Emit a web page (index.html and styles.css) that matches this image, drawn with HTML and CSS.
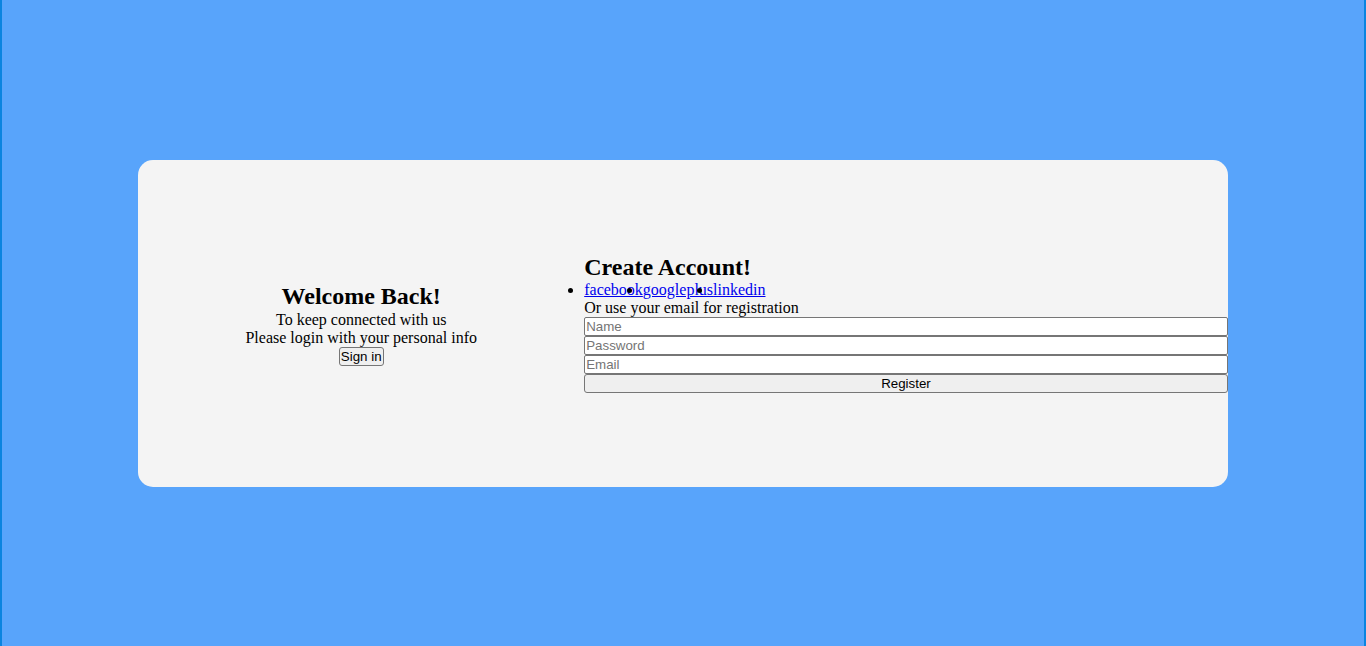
FILE: index.html
```html
<!DOCTYPE html>
<html lang="en">
<head>
<meta charset="utf-8">
<title>Sign up</title>
<link rel="stylesheet" href="styles.css">
</head>
<body>
  <div class="container">
    <div class="overlay-panel">
      <h2>Welcome Back!</h2>
      <p>To keep connected with us</p>
      <p>Please login with your personal info</p>
      <button class="ghost">Sign in</button>
    </div>
    <div class="form-panel">
      <form class="form">
        <h2>Create Account!</h2>
        <ul class="social">
          <li><a href="#">facebook</a></li>
          <li><a href="#">googleplus</a></li>
          <li><a href="#">linkedin</a></li>
        </ul>
        <span>Or use your email for registration</span>
        <input type="text" placeholder="Name">
        <input type="password" placeholder="Password">
        <input type="email" placeholder="Email">
        <button type="button">Register</button>
      </form>
    </div>
  </div>
</body>
</html>
```

FILE: styles.css
```css
* {
  margin: 0;
  padding: 0;
  box-sizing: border-box;
}

html, body {
  height: 100%;
}

body {
  background: #58a4fb;
  border-left: 2px solid #0a84e0;
  border-right: 2px solid #0a84e0;
  font-family: "Liberation Serif", "Times New Roman", serif;
  font-size: 16px;
  color: #000;
  display: flex;
  align-items: center;
  justify-content: center;
}

.container {
  width: 80%;
  height: 327px;
  background: #f4f4f4;
  border-radius: 15px;
  display: flex;
  align-items: center;
}

h2 {
  font-size: 24px;
  font-weight: bold;
}

.overlay-panel {
  width: 446px;
  flex: none;
  text-align: center;
  padding-top: 2px;
}

.overlay-panel h2 {
  line-height: 29px;
}

.form-panel {
  flex: 1;
  min-width: 0;
}

.form {
  display: flex;
  flex-direction: column;
}

.social {
  display: flex;
  list-style: disc outside;
}

.social a {
  color: #0000ee;
}

input,
button {
  font-family: "Liberation Sans", Arial, sans-serif;
  font-size: 13.333px;
  padding: 1px;
  border: 1px solid #767676;
  color: #000;
}

input {
  background: #fff;
  border-radius: 2px;
}

input::placeholder {
  color: #757575;
}

button {
  background: #efefef;
  border-radius: 3px;
}
```
